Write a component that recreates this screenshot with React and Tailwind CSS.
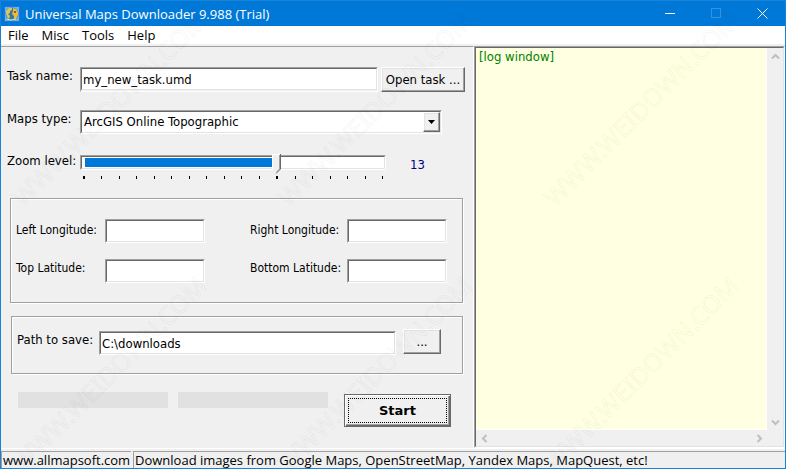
import React, { useState } from 'react';

const MENUS = ['File', 'Misc', 'Tools', 'Help'];
const MIN_ZOOM = 2;
const MAX_ZOOM = 19;

const WindowButton = ({ label, disabled, children }) => (
    <button type="button" aria-label={label} disabled={disabled} className="flex h-full w-[46px] items-center justify-center">
        <svg width="11" height="11" viewBox="0 0 11 11" fill="none" stroke={disabled ? '#3393df' : '#fff'} shapeRendering={label === 'Close' ? 'auto' : 'crispEdges'}>
            {children}
        </svg>
    </button>
)

const TitleBar = () => (
    <header className="flex h-[25px] items-center bg-[#0078d7] pl-[3px] text-white">
        <svg width="16" height="16" viewBox="0 0 16 16" className="shrink-0">
            <rect x=".5" y=".5" width="15" height="15" fill="#5cbbe0" stroke="#2a6fe0" />
            <circle cx="8" cy="8" r="6.500" fill="#2f7d9c" />
            <path d="M2 5l3-3 3 0 0 2-2 1 0 2-2 1 2 2-1 3-2-2-1-3z" fill="#e0c268" />
            <path d="M9 2l3 1 2 3 0 3-2 4-2 0 0-3-2-2 1-3z" fill="#f0b840" />
            <path d="M10 5l2 0 0 2-2 0z" fill="#7a6a2a" />
            <path d="M3 13l4 1 5-1" fill="none" stroke="#d8ecc0" />
        </svg>
        <h1 className="ml-[5px] flex-1 font-['Open_Sans',sans-serif] text-[13px]">Universal Maps Downloader 9.988 (Trial)</h1>
        <WindowButton label="Minimize"><path d="M0 5.5h10" /></WindowButton>
        <WindowButton label="Maximize" disabled><path d="M.5 .5h9v9h-9z" /></WindowButton>
        <WindowButton label="Close"><path d="M.5 .5l10 10M10.5 .5l-10 10" /></WindowButton>
    </header>
)

const MenuBar = () => (
    <nav className="flex h-[18px] items-center gap-[13px] bg-white px-[7px] font-['Open_Sans',sans-serif] text-[13px]">
        {MENUS.map((menu) => (
            <button key={menu} type="button">{menu}</button>
        ))}
    </nav>
)

const sunken = 'border border-t-[#a0a0a0] border-l-[#a0a0a0] border-r-white border-b-white';
const sunkenInner = 'border border-t-[#696969] border-l-[#696969] border-r-[#e3e3e3] border-b-[#e3e3e3]';
const raised = 'border border-t-white border-l-white border-r-[#696969] border-b-[#696969] shadow-[inset_-1px_-1px_0_#a0a0a0,inset_1px_1px_0_#e3e3e3] bg-[#f0f0f0]';
const group = 'border border-[#a0a0a0] shadow-[1px_1px_0_#fff,inset_1px_1px_0_#fff]';

const TextBox = ({ id, className, ...props }) => (
    <div className={`${sunken} ${className}`}>
        <input id={id} type="text" className={`${sunkenInner} block h-[22px] w-full bg-white px-px outline-none`} {...props} />
    </div>
)

const ZoomSlider = ({ zoom, setZoom }) => {
    const percent = ((zoom - MIN_ZOOM) / (MAX_ZOOM - MIN_ZOOM)) * 100;
    const ticks = [];
    for (let i = MIN_ZOOM; i <= MAX_ZOOM; i++) ticks.push(i);

    return (
        <div className="relative w-[306px]">
            <div className={sunken}>
                <div className={`${sunkenInner} h-[13px] bg-white px-[3px] py-px`}>
                    <div className="h-[9px] bg-[#0078d7]" style={{ width: `${Math.max(percent - 1, 0)}%` }}></div>
                </div>
            </div>
            <div className="flex h-[9px] items-end justify-between px-[3px]">
                {ticks.map((t) => (
                    <span key={t} className={t === MIN_ZOOM || t === zoom ? 'h-[3px] w-[2px] bg-black' : 'h-[3px] w-px bg-black'}></span>
                ))}
            </div>
            <svg width="9" height="20" viewBox="0 0 9 20" className="absolute top-[-1px]" style={{ left: Math.round(percent * 2.97) }}>
                <path d="M0 0h9v15l-5 5-4-5z" fill="#f0f0f0" />
                <path d="M.5 15V.5H8" fill="none" stroke="#fff" />
                <path d="M7.500 1v14l-3 3" fill="none" stroke="#a0a0a0" />
                <path d="M8.500 0v15l-4.500 4.500" fill="none" stroke="#696969" />
            </svg>
            <input
                id="zoom"
                type="range"
                min={MIN_ZOOM}
                max={MAX_ZOOM}
                value={zoom}
                onChange={(e) => setZoom(Number(e.target.value))}
                className="absolute inset-x-0 top-0 h-[20px] w-full opacity-0"
            />
        </div>
    )
}

const Chevron = ({ d, label }) => (
    <button type="button" aria-label={label} className="flex size-[16px] shrink-0 items-center justify-center">
        <svg width="9" height="9" viewBox="0 0 9 9" fill="none" stroke="#bfbfbf" strokeWidth="2"><path d={d} /></svg>
    </button>
)

const LogPanel = () => (
    <section className={`${sunken} flex min-w-0 flex-1`}>
        <div className={`${sunkenInner} flex min-w-0 flex-1 bg-[#f0f0f0]`}>
            <div className="flex min-w-0 flex-1 flex-col">
                <div className="flex-1 border-r border-b border-white bg-[#ffffe1] px-[3px] text-[#008000]">[log window]</div>
                <div className="flex h-[16px] justify-between">
                    <Chevron label="Scroll left" d="M6.500 1L3 4.500L6.500 8" />
                    <Chevron label="Scroll right" d="M2.500 1L6 4.500L2.500 8" />
                </div>
            </div>
            <div className="flex w-[16px] flex-col justify-between pb-[16px]">
                <Chevron label="Scroll up" d="M1 6.500L4.500 3L8 6.500" />
                <Chevron label="Scroll down" d="M1 2.500L4.500 6L8 2.500" />
            </div>
        </div>
    </section>
)

const MARKS = [[22, 207], [288, 207], [554, 207], [22, 472], [288, 472], [554, 472]];

const Watermark = () => (
    <svg aria-hidden="true" className="pointer-events-none absolute top-0 left-0 h-full w-full overflow-visible">
        {MARKS.map(([x, y]) => (
            <text key={`${x}-${y}`} transform={`translate(${x} ${y}) rotate(-45)`} fill="none" stroke="#000" strokeOpacity="0.05" fontSize="25" className="font-['Noto_Sans',sans-serif]">
                WWW.WEIDOWN.COM
            </text>
        ))}
    </svg>
)

const App = () => {
    const [taskName, setTaskName] = useState('my_new_task.umd');
    const [mapType, setMapType] = useState('ArcGIS Online Topographic');
    const [zoom, setZoom] = useState(13);
    const [path, setPath] = useState('C:\\downloads');

    return (
        <div className="relative flex min-h-screen flex-col overflow-hidden border border-[#1883d7] bg-[#f0f0f0] font-['DejaVu_Sans_Condensed','DejaVu_Sans',sans-serif] text-[13px] leading-[18px] text-black">
            <TitleBar />
            <MenuBar />
            <main className="mt-[2px] flex flex-1">
                <div className="w-[473px] shrink-0 border-t border-r border-t-[#a0a0a0] border-r-white">
                    <div className="flex pt-[20px] pl-[6px]">
                        <label htmlFor="task" className="w-[73px]">Task name:</label>
                        <TextBox id="task" className="w-[298px]" value={taskName} onChange={(e) => setTaskName(e.target.value)} />
                        <button type="button" className={`${raised} ml-[3px] h-[25px] w-[84px] whitespace-nowrap`}>Open task ...</button>
                    </div>

                    <div className="flex pt-[18px] pl-[6px]">
                        <label htmlFor="maps" className="w-[73px]">Maps type:</label>
                        <div className={`${sunken} relative w-[362px]`}>
                            <select id="maps" value={mapType} onChange={(e) => setMapType(e.target.value)} className={`${sunkenInner} block h-[22px] w-full appearance-none bg-white px-[2px] outline-none`}>
                                <option>ArcGIS Online Topographic</option>
                            </select>
                            <span className={`${raised} pointer-events-none absolute top-px right-px flex h-[20px] w-[17px] items-center justify-center`}>
                                <svg width="7" height="4" viewBox="0 0 7 4"><path d="M0 0h7L3.500 4z" /></svg>
                            </span>
                        </div>
                    </div>

                    <div className="flex pt-[18px] pl-[6px]">
                        <label htmlFor="zoom" className="w-[73px]">Zoom level:</label>
                        <div className="pt-[3px]">
                            <ZoomSlider zoom={zoom} setZoom={setZoom} />
                        </div>
                        <output htmlFor="zoom" className="ml-[24px] pt-[4px] text-[#000080]">{zoom}</output>
                    </div>

                    <div className={`${group} mt-[19px] ml-[9px] grid h-[105px] w-[453px] grid-cols-[89px_145px_97px_99px] content-start gap-y-[16px] pt-[20px] pl-[5px] text-[12px] whitespace-nowrap`}>
                        <label htmlFor="left" className="pt-[2px]">Left Longitude:</label>
                        <TextBox id="left" className="w-[100px]" />
                        <label htmlFor="right" className="pt-[2px]">Right Longitude:</label>
                        <TextBox id="right" className="w-[100px]" />
                        <label htmlFor="top">Top Latitude:</label>
                        <TextBox id="top" className="w-[100px]" />
                        <label htmlFor="bottom">Bottom Latitude:</label>
                        <TextBox id="bottom" className="w-[100px]" />
                    </div>

                    <div className={`${group} mt-[13px] ml-[10px] flex h-[58px] w-[452px] pt-[12px] pl-[5px]`}>
                        <label htmlFor="path" className="w-[82px] pt-[2px]">Path to save:</label>
                        <TextBox id="path" className="mt-[2px] h-[24px] w-[297px]" value={path} onChange={(e) => setPath(e.target.value)} />
                        <button type="button" className={`${raised} ml-[7px] h-[25px] w-[38px]`}>...</button>
                    </div>

                    <div className="flex gap-[10px] pt-[18px] pl-[17px]">
                        <div role="progressbar" aria-label="Task progress" className="h-[16px] w-[150px] bg-[#e1e1e1]"></div>
                        <div role="progressbar" aria-label="File progress" className="h-[16px] w-[150px] bg-[#e1e1e1]"></div>
                        <button type="button" className="mt-[2px] ml-[6px] h-[33px] w-[107px] border border-[#696969] bg-[#f0f0f0] p-[3px] font-['DejaVu_Sans',sans-serif] text-[13px] font-bold shadow-[inset_1px_1px_0_#fff,inset_-1px_-1px_0_#696969,inset_-2px_-2px_0_#a0a0a0]">
                            <span className="flex h-full items-center justify-center border border-dotted border-black">Start</span>
                        </button>
                    </div>
                </div>
                <LogPanel />
            </main>
            <footer className="flex h-[20px] gap-[2px] border-t border-white pt-[2px] font-['Open_Sans',sans-serif] text-[13px] leading-[16px]">
                <a href="http://www.allmapsoft.com" className="w-[130px] border-t border-l border-[#a0a0a0] pl-px">www.allmapsoft.com</a>
                <p className="flex-1 border-t border-l border-[#a0a0a0] pl-px whitespace-nowrap">Download images from Google Maps, OpenStreetMap, Yandex Maps, MapQuest, etc!</p>
            </footer>
            <Watermark />
        </div>
    );
}

export default App;
